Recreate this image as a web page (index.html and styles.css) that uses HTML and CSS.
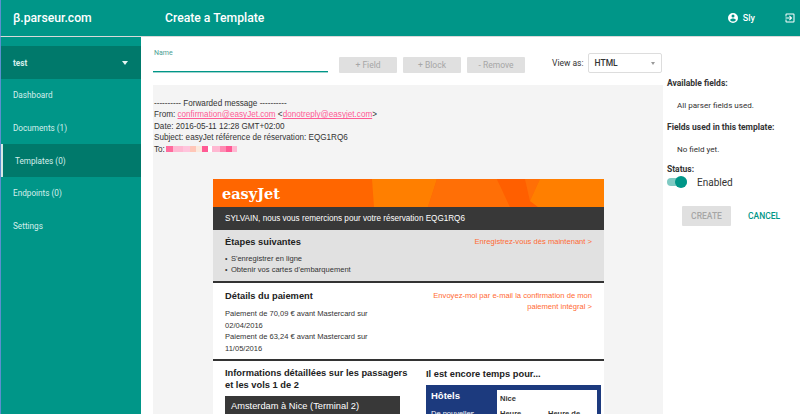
FILE: index.html
```html
<!DOCTYPE html>
<html lang="en">
<head>
    <meta charset="UTF-8">
    <meta name="viewport" content="width=device-width, initial-scale=1.0">
    <title>Create a Template</title>
    <link rel="stylesheet" href="styles.css">
</head>
<body>
    <header class="topbar">
        <div class="brand">β.parseur.com</div>
        <div class="page-title">Create a Template</div>
        <div class="user">
            <svg class="user-icon" viewBox="0 0 24 24"><path fill="currentColor" d="M12 2a10 10 0 1 0 0 20 10 10 0 0 0 0-20zm0 3a3 3 0 1 1 0 6 3 3 0 0 1 0-6zm0 14.2a7.2 7.2 0 0 1-6-3.2c0-2 4-3.1 6-3.1s6 1.1 6 3.1a7.2 7.2 0 0 1-6 3.2z"/></svg>
            <span>Sly</span>
        </div>
        <svg class="logout-icon" viewBox="0 0 24 24"><path fill="currentColor" d="M10.09 15.59L11.5 17l5-5-5-5-1.41 1.41L12.67 11H3v2h9.67l-2.58 2.59zM19 3H5a2 2 0 0 0-2 2v4h2V5h14v14H5v-4H3v4a2 2 0 0 0 2 2h14a2 2 0 0 0 2-2V5a2 2 0 0 0-2-2z"/></svg>
    </header>

    <div class="layout">
        <aside class="sidebar">
            <div class="account">
                <span>test</span>
                <span class="caret"></span>
            </div>
            <nav>
                <a class="nav-item">Dashboard</a>
                <a class="nav-item">Documents (1)</a>
                <a class="nav-item active">Templates (0)</a>
                <a class="nav-item">Endpoints (0)</a>
                <a class="nav-item">Settings</a>
            </nav>
        </aside>

        <main class="content">
            <section class="editor">
                <div class="toolbar">
                    <div class="name-field">
                        <label>Name</label>
                        <div class="name-line"></div>
                    </div>
                    <div class="tool-buttons">
                        <button class="tool-btn">+ Field</button>
                        <button class="tool-btn">+ Block</button>
                        <button class="tool-btn">- Remove</button>
                    </div>
                    <div class="view-as">
                        <span>View as:</span>
                        <div class="select">HTML<span class="select-caret"></span></div>
                    </div>
                </div>

                <div class="document">
                    <div class="mail-head">
                        <div>---------- Forwarded message ----------</div>
                        <div>From: <a>confirmation@easyJet.com</a> &lt;<a>donotreply@easyjet.com</a>&gt;</div>
                        <div>Date: 2016-05-11 12:28 GMT+02:00</div>
                        <div>Subject: easyJet référence de réservation: EQG1RQ6</div>
                        <div class="to-line">To:<span class="redacted"></span></div>
                    </div>

                    <div class="mail">
                        <div class="banner">
                            <svg class="banner-art" viewBox="0 0 391 28" preserveAspectRatio="none">
                                <polygon fill="#ff7f00" points="159,0 224,0 215,28 161,28"/>
                                <polygon fill="#ff6f06" points="224,0 284,0 297,28 215,28"/>
                                <polygon fill="#ff5f00" points="284,0 312,0 317,22 325,28 297,28"/>
                                <polygon fill="#ff6f06" points="312,0 327,0 317,22"/>
                                <polygon fill="#ff7f00" points="327,0 391,0 391,28 325,28 317,22"/>
                            </svg>
                            <span class="logo">easyJet</span>
                        </div>
                        <div class="thanks">SYLVAIN, nous vous remercions pour votre réservation EQG1RQ6</div>

                        <div class="steps">
                            <div class="row-split">
                                <h3>Étapes suivantes</h3>
                                <a class="mail-link">Enregistrez-vous dès maintenant &gt;</a>
                            </div>
                            <ul>
                                <li>S'enregistrer en ligne</li>
                                <li>Obtenir vos cartes d'embarquement</li>
                            </ul>
                        </div>

                        <div class="payment">
                            <div class="payment-left">
                                <h3>Détails du paiement</h3>
                                <p>Paiement de 70,09 € avant Mastercard sur 02/04/2016</p>
                                <p>Paiement de 63,24 € avant Mastercard sur 11/05/2016</p>
                            </div>
                            <a class="mail-link payment-link">Envoyez-moi par e-mail la confirmation de mon paiement intégral &gt;</a>
                        </div>

                        <div class="details">
                            <div class="details-left">
                                <h3>Informations détaillées sur les passagers et les vols 1 de 2</h3>
                                <div class="flight">Amsterdam à Nice (Terminal 2)</div>
                            </div>
                            <div class="details-right">
                                <h3>Il est encore temps pour...</h3>
                                <div class="hotel">
                                    <div class="hotel-left">
                                        <div class="hotel-title">Hôtels</div>
                                        <div class="hotel-text">De nouvelles</div>
                                    </div>
                                    <div class="hotel-card">
                                        <div>Nice</div>
                                        <div class="hotel-cols"><span>Heure</span><span>Heure de</span></div>
                                    </div>
                                </div>
                            </div>
                        </div>
                    </div>
                </div>
            </section>

            <section class="side">
                <h4>Available fields:</h4>
                <p>All parser fields used.</p>
                <h4>Fields used in this template:</h4>
                <p>No field yet.</p>
                <h4 class="status-title">Status:</h4>
                <div class="status">
                    <span class="switch"><span class="knob"></span></span>
                    <span>Enabled</span>
                </div>
                <div class="actions">
                    <button class="create">CREATE</button>
                    <button class="cancel">CANCEL</button>
                </div>
            </section>
        </main>
    </div>
</body>
</html>
```

FILE: styles.css
```css
* {
    box-sizing: border-box;
}
body {
    margin: 0;
    height: 414px;
    overflow: hidden;
    font-family: Roboto, Arial, sans-serif;
    background-color: white;
    color: #333;
}
h3, h4, p, ul {
    margin: 0;
}

/* Top bar */
.topbar {
    height: 37px;
    display: flex;
    align-items: center;
    background-color: #009688;
    color: white;
    border-bottom: 1px solid #d9d9d9;
    border-left: 1px solid #5b8fd0;
}
.brand {
    width: 164px;
    padding-left: 12px;
    font-size: 12.2px;
    font-weight: 500;
}
.page-title {
    flex: 1;
    font-size: 12.2px;
    font-weight: 500;
}
.user {
    display: flex;
    align-items: center;
    gap: 4px;
    font-size: 9px;
    font-weight: 500;
    margin-right: 29px;
}
.user-icon {
    width: 12px;
    height: 12px;
}
.logout-icon {
    width: 12px;
    height: 12px;
    margin-right: 4px;
}

/* Sidebar */
.layout {
    display: flex;
    height: 377px;
}
.sidebar {
    width: 141px;
    flex-shrink: 0;
    padding-top: 9px;
    background-color: #009688;
    border-left: 1px solid #5b8fd0;
    color: #d5efec;
    font-size: 8.2px;
}
.account {
    height: 33px;
    display: flex;
    align-items: center;
    justify-content: space-between;
    padding: 0 13px 0 12px;
    background-color: #00796b;
    font-weight: 700;
}
.caret {
    border-left: 3.5px solid transparent;
    border-right: 3.5px solid transparent;
    border-top: 4px solid #e6f4f2;
}
.nav-item {
    display: flex;
    align-items: center;
    height: 32.7px;
    padding-left: 12px;
}
.nav-item.active {
    background-color: #00796b;
    border-left: 2px solid #d8e8e6;
}

/* Main area */
.content {
    flex: 1;
    display: flex;
    padding-left: 12px;
}
.editor {
    width: 510px;
    flex-shrink: 0;
}
.toolbar {
    height: 48px;
    display: flex;
    padding-top: 12px;
}
.name-field {
    width: 175px;
    margin-right: 11px;
}
.name-field label {
    display: block;
    margin-left: 1px;
    font-size: 7px;
    line-height: 8px;
    color: #4c9e94;
}
.name-line {
    margin-top: 14px;
    border-bottom: 1px solid #009688;
    box-shadow: 0 1px 0 #9fd5cf;
}
.tool-buttons {
    display: flex;
    gap: 6px;
    padding-top: 8px;
}
.tool-btn {
    width: 58px;
    height: 16px;
    padding: 0;
    border: none;
    border-radius: 1px;
    background-color: #e0e0e0;
    color: #a6a6a6;
    font-family: inherit;
    font-size: 8.5px;
}
.view-as {
    display: flex;
    align-items: center;
    gap: 4px;
    margin-left: 27px;
    height: 20px;
    margin-top: 4px;
    font-size: 8.5px;
    white-space: nowrap;
}
.select {
    position: relative;
    width: 74px;
    height: 20px;
    display: flex;
    align-items: center;
    padding-left: 6px;
    border: 1px solid #ddd;
    border-radius: 2px;
    font-weight: 500;
}
.select-caret {
    position: absolute;
    right: 6px;
    top: 8px;
    border-left: 2.5px solid transparent;
    border-right: 2.5px solid transparent;
    border-top: 3px solid #999;
}

/* Document preview */
.document {
    height: 329px;
    overflow: hidden;
    background-color: #f4f4f4;
}
.mail-head {
    padding: 13px 0 0 1px;
    height: 94px;
    font-family: "Liberation Sans", Arial, sans-serif;
    font-size: 8.15px;
    line-height: 11.4px;
    color: #333;
}
.mail-head a {
    color: #ff5a94;
    text-decoration: underline;
}
.to-line {
    display: flex;
    align-items: center;
}
.redacted {
    width: 71px;
    height: 6px;
    margin-left: 1px;
    background: linear-gradient(to right, #ff6b9d 0 7px, #ffb8d2 7px 17px, #ffc4dc 17px 24px, #ffc7b8 24px 30px, #fbe9dc 30px 36px, #ff5a94 36px 42px, #fff 42px 46px, #ffb8d2 46px 54px, #ff8ab2 54px 60px, #ff5a94 60px 66px, #ffb8d2 66px 71px);
}

/* Email body */
.mail {
    width: 391px;
    margin-left: 60px;
    background-color: white;
    font-family: "Liberation Sans", Arial, sans-serif;
    color: #333;
}
.mail h3 {
    font-size: 9.3px;
    line-height: 12px;
    color: #222;
}
.banner {
    position: relative;
    height: 28px;
    display: flex;
    align-items: center;
    padding-left: 9px;
    background-color: #ff6600;
}
.banner-art {
    position: absolute;
    top: 0;
    left: 0;
    width: 100%;
    height: 100%;
}
.logo {
    position: relative;
    font-family: "DejaVu Serif", serif;
    font-size: 14.5px;
    font-weight: 700;
    color: white;
}
.thanks {
    height: 23px;
    display: flex;
    align-items: center;
    padding-left: 12px;
    background-color: #383838;
    color: white;
    font-size: 8.15px;
}
.steps {
    height: 53px;
    padding: 5px 12px 0;
    background-color: #e1e1e1;
    border-bottom: 2px solid #333;
}
.row-split {
    display: flex;
    justify-content: space-between;
    align-items: center;
    height: 14px;
}
.mail-link {
    color: #ff6a33;
    font-size: 7.6px;
    line-height: 11.4px;
}
.steps ul {
    list-style: none;
    padding: 4px 0 0;
    font-size: 7.55px;
    line-height: 11.3px;
}
.steps li::before {
    content: "•";
    margin-right: 3.5px;
    font-size: 7px;
}
.payment {
    height: 78px;
    display: flex;
    justify-content: space-between;
    padding: 7px 12px 0;
    border-bottom: 2px solid #333;
}
.payment-left {
    width: 148px;
}
.payment-left p {
    font-size: 7.55px;
    line-height: 11.6px;
}
.payment-left h3 {
    margin-bottom: 6px;
}
.payment-link {
    width: 166px;
    text-align: right;
}
.details {
    display: flex;
    padding: 7px 0 0 12px;
}
.details-left {
    width: 189px;
    margin-right: 12px;
}
.details-left h3 {
    line-height: 11.7px;
}
.flight {
    width: 175px;
    height: 30px;
    margin-top: 5px;
    padding: 5px 6px;
    background-color: #383838;
    color: white;
    font-size: 9.3px;
}
.details-right {
    width: 175px;
}
.hotel {
    display: flex;
    height: 40px;
    margin-top: 5px;
    padding: 5px 4px 0 5px;
    background-color: #1c3a7e;
}
.hotel-left {
    width: 66px;
    color: white;
}
.hotel-title {
    font-size: 9.5px;
    font-weight: 700;
}
.hotel-text {
    margin-top: 8px;
    font-size: 7.5px;
}
.hotel-card {
    flex: 1;
    padding: 4px 3px;
    background-color: white;
    font-size: 7.5px;
    font-weight: 700;
}
.hotel-cols {
    display: grid;
    grid-template-columns: 48px auto;
    margin-top: 6px;
}

/* Right panel */
.side {
    flex: 1;
    padding: 41px 0 0 4px;
    font-size: 8.05px;
}
.side h4 {
    font-size: 8.5px;
    font-weight: 700;
    line-height: 11px;
}
.side p {
    padding: 11px 0 11px 10px;
    line-height: 11px;
}
.status-title {
    margin-top: -2px;
}
.status {
    display: flex;
    align-items: center;
    height: 12px;
    margin-top: 1px;
    gap: 10px;
    font-size: 10px;
}
.switch {
    position: relative;
    width: 20px;
    height: 8px;
    border-radius: 4px;
    background-color: #7fcac3;
}
.knob {
    position: absolute;
    right: 0;
    top: -2px;
    width: 12px;
    height: 12px;
    border-radius: 50%;
    background-color: #009688;
}
.actions {
    display: flex;
    align-items: center;
    gap: 17px;
    margin-top: 18px;
    padding-left: 15px;
}
.actions button {
    padding: 0;
    border: none;
    font-family: inherit;
    font-size: 8.5px;
    font-weight: 500;
}
.create {
    width: 49px;
    height: 20px;
    border-radius: 1px;
    background-color: #e0e0e0;
    color: #a6a6a6;
}
.cancel {
    background: none;
    color: #009688;
}
```
